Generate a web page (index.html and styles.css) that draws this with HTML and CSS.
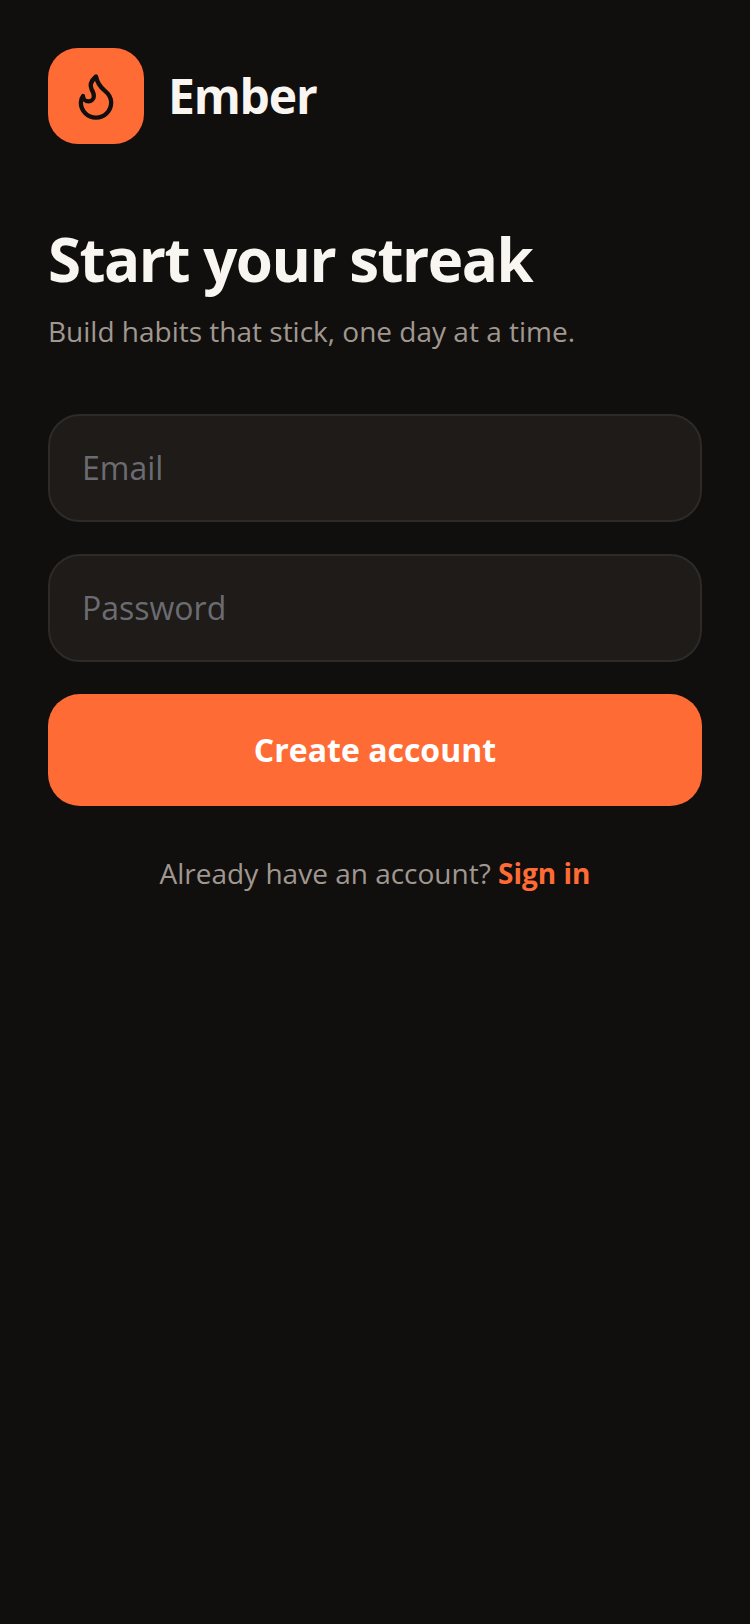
FILE: index.html
```html
<!DOCTYPE html>
<html lang="en">
  <head>
    <meta charset="UTF-8" />
    <meta name="viewport" content="width=device-width, initial-scale=1.0" />
    <title>Ember</title>
    <link rel="stylesheet" href="styles.css">
  </head>
  <body>
    <div class="container">
      <div class="brand">
        <div class="brand-icon">
          <svg width="52" height="52" viewBox="0 0 24 24" fill="none" stroke="#100f0e" stroke-width="2" stroke-linecap="round" stroke-linejoin="round">
            <path d="M8.5 14.5A2.5 2.5 0 0 0 11 12c0-1.38-.5-2-1-3-1.072-2.143-.224-4.054 2-6 .5 2.5 2 4.9 4 6.5 2 1.6 3 3.5 3 5.5a7 7 0 1 1-14 0c0-1.153.433-2.294 1-3a2.5 2.5 0 0 0 2.5 2.5z" />
          </svg>
        </div>
        <span class="brand-name">Ember</span>
      </div>

      <h1>Start your streak</h1>
      <p class="subtitle">Build habits that stick, one day at a time.</p>

      <form id="signupForm">
        <input type="email" placeholder="Email" />
        <input type="password" placeholder="Password" />
        <button type="submit">Create account</button>
      </form>

      <p class="signin">Already have an account? <a href="#">Sign in</a></p>
    </div>
  </body>
</html>
```

FILE: styles.css
```css
:root {
  --primary-color: #ff6b35;
  --background: #100f0e;
  --field: #1e1b18;
  --field-border: #2e2a27;
  --text: #f9f6f1;
  --text-muted: #a09890;
  --placeholder: #6b6b72;
}
body {
  font-family: "Open Sans", sans-serif;
  margin: 0;
  background-color: var(--background);
  color: var(--text);
}
.container {
  min-height: 1624px;
  box-sizing: border-box;
  padding: 48px;
}
.brand {
  display: flex;
  align-items: center;
  gap: 24px;
  margin-bottom: 75px;
}
.brand-icon {
  display: flex;
  align-items: center;
  justify-content: center;
  width: 96px;
  height: 96px;
  border-radius: 30px;
  background-color: var(--primary-color);
}
.brand-name {
  font-size: 48px;
  line-height: 66px;
  font-weight: 700;
  letter-spacing: -1.2px;
}
h1 {
  margin: 0 0 12px;
  font-size: 60px;
  line-height: 80px;
  font-weight: 700;
  letter-spacing: -1.5px;
}
.subtitle {
  margin: 0 0 63px;
  font-size: 28px;
  line-height: 40px;
  color: var(--text-muted);
}
form {
  display: flex;
  flex-direction: column;
  gap: 32px;
}
input {
  width: 100%;
  height: 108px;
  padding: 0 32px 2px;
  box-sizing: border-box;
  border: 2px solid var(--field-border);
  border-radius: 32px;
  background-color: var(--field);
  color: var(--text);
  font-family: "Open Sans", sans-serif;
  font-size: 32px;
}
input::placeholder {
  color: var(--placeholder);
  opacity: 1;
}
button {
  height: 112px;
  padding: 0 0 2px;
  border: none;
  border-radius: 32px;
  background-color: var(--primary-color);
  color: white;
  font-family: "Open Sans", sans-serif;
  font-size: 32px;
  font-weight: 700;
  cursor: pointer;
}
.signin {
  margin: 48px 0 0;
  text-align: center;
  font-size: 28px;
  line-height: 38px;
  color: var(--text-muted);
}
.signin a {
  color: var(--primary-color);
  font-weight: 700;
  text-decoration: none;
}
```
